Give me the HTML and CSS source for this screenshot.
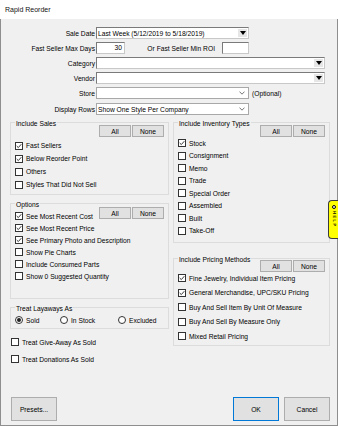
FILE: index.html
```html
<!DOCTYPE html>
<html>
<head>
<meta charset="utf-8">
<title>Rapid Reorder</title>
<link rel="stylesheet" href="styles.css">
</head>
<body>
<div class="window">
  <div class="titlebar">Rapid Reorder</div>
  <div class="content">
    <div class="form">
      <div class="row">
        <span class="lbl">Sale Date</span>
        <div class="combo sunken w153"><span class="val">Last Week (5/12/2019 to 5/18/2019)</span><span class="drop"><svg width="6" height="4" viewBox="0 0 6 4"><path d="M0 0H6L3 4Z" fill="#000"/></svg></span></div>
      </div>
      <div class="row">
        <span class="lbl">Fast Seller Max Days</span>
        <div class="textbox days">30</div>
        <span class="lbl-mid">Or Fast Seller Min ROI</span>
        <div class="textbox roi"></div>
      </div>
      <div class="row">
        <span class="lbl">Category</span>
        <div class="combo sunken w229"><span class="val"></span><span class="drop"><svg width="6" height="4" viewBox="0 0 6 4"><path d="M0 0H6L3 4Z" fill="#000"/></svg></span></div>
      </div>
      <div class="row">
        <span class="lbl">Vendor</span>
        <div class="combo sunken w229"><span class="val"></span><span class="drop"><svg width="6" height="4" viewBox="0 0 6 4"><path d="M0 0H6L3 4Z" fill="#000"/></svg></span></div>
      </div>
      <div class="row">
        <span class="lbl">Store</span>
        <div class="combo flat w153"><span class="val"></span><span class="chev"><svg width="6" height="4" viewBox="0 0 6 4"><path d="M0.5 0.6L3 3.2L5.5 0.6" fill="none" stroke="#555" stroke-width="0.8"/></svg></span></div>
        <span class="note">(Optional)</span>
      </div>
      <div class="row row-last">
        <span class="lbl">Display Rows</span>
        <div class="combo flat w153"><span class="val">Show One Style Per Company</span><span class="chev"><svg width="6" height="4" viewBox="0 0 6 4"><path d="M0.5 0.6L3 3.2L5.5 0.6" fill="none" stroke="#555" stroke-width="0.8"/></svg></span></div>
      </div>
    </div>

    <div class="groups">
      <div class="col left">
        <div class="group sales">
          <div class="g-head">
            <span class="g-title">Include Sales</span>
            <div class="btns btns-6"><button class="btn">All</button><button class="btn">None</button></div>
          </div>
          <div class="list list-13">
            <label class="chk"><span class="cb"><svg width="6" height="6" viewBox="0 0 6 6"><path d="M0.7 3L2.3 4.6L5.3 1.2" fill="none" stroke="#222" stroke-width="0.9"/></svg></span>Fast Sellers</label>
            <label class="chk"><span class="cb"><svg width="6" height="6" viewBox="0 0 6 6"><path d="M0.7 3L2.3 4.6L5.3 1.2" fill="none" stroke="#222" stroke-width="0.9"/></svg></span>Below Reorder Point</label>
            <label class="chk"><span class="cb"></span>Others</label>
            <label class="chk"><span class="cb"></span>Styles That Did Not Sell</label>
          </div>
        </div>

        <div class="group options">
          <div class="opts-top">
            <div class="opts-left">
              <span class="g-title">Options</span>
              <label class="chk"><span class="cb"><svg width="6" height="6" viewBox="0 0 6 6"><path d="M0.7 3L2.3 4.6L5.3 1.2" fill="none" stroke="#222" stroke-width="0.9"/></svg></span>See Most Recent Cost</label>
            </div>
            <div class="btns btns-7"><button class="btn">All</button><button class="btn">None</button></div>
          </div>
          <div class="list list-12">
            <label class="chk"><span class="cb"><svg width="6" height="6" viewBox="0 0 6 6"><path d="M0.7 3L2.3 4.6L5.3 1.2" fill="none" stroke="#222" stroke-width="0.9"/></svg></span>See Most Recent Price</label>
            <label class="chk"><span class="cb"><svg width="6" height="6" viewBox="0 0 6 6"><path d="M0.7 3L2.3 4.6L5.3 1.2" fill="none" stroke="#222" stroke-width="0.9"/></svg></span>See Primary Photo and Description</label>
            <label class="chk"><span class="cb"></span>Show Pie Charts</label>
            <label class="chk"><span class="cb"></span>Include Consumed Parts</label>
            <label class="chk"><span class="cb"></span>Show 0 Suggested Quantity</label>
          </div>
        </div>

        <div class="group layaways">
          <span class="g-title">Treat Layaways As</span>
          <div class="radios">
            <label class="radio r-sold"><span class="rb on"></span>Sold</label>
            <label class="radio r-stock"><span class="rb"></span>In Stock</label>
            <label class="radio"><span class="rb"></span>Excluded</label>
          </div>
        </div>

        <label class="chk solo solo-1"><span class="cb"></span>Treat Give-Away As Sold</label>
        <label class="chk solo solo-2"><span class="cb"></span>Treat Donations As Sold</label>
      </div>

      <div class="col right">
        <div class="group inventory">
          <div class="g-head">
            <span class="g-title">Include Inventory Types</span>
            <div class="btns btns-6"><button class="btn">All</button><button class="btn">None</button></div>
          </div>
          <div class="list list-125">
            <label class="chk"><span class="cb"><svg width="6" height="6" viewBox="0 0 6 6"><path d="M0.7 3L2.3 4.6L5.3 1.2" fill="none" stroke="#222" stroke-width="0.9"/></svg></span>Stock</label>
            <label class="chk"><span class="cb"></span>Consignment</label>
            <label class="chk"><span class="cb"></span>Memo</label>
            <label class="chk"><span class="cb"></span>Trade</label>
            <label class="chk"><span class="cb"></span>Special Order</label>
            <label class="chk"><span class="cb"></span>Assembled</label>
            <label class="chk"><span class="cb"></span>Built</label>
            <label class="chk"><span class="cb"></span>Take-Off</label>
          </div>
        </div>

        <div class="group pricing">
          <div class="g-head">
            <span class="g-title">Include Pricing Methods</span>
            <div class="btns btns-5"><button class="btn">All</button><button class="btn">None</button></div>
          </div>
          <div class="list list-145">
            <label class="chk"><span class="cb"><svg width="6" height="6" viewBox="0 0 6 6"><path d="M0.7 3L2.3 4.6L5.3 1.2" fill="none" stroke="#222" stroke-width="0.9"/></svg></span>Fine Jewelry, Individual Item Pricing</label>
            <label class="chk"><span class="cb"><svg width="6" height="6" viewBox="0 0 6 6"><path d="M0.7 3L2.3 4.6L5.3 1.2" fill="none" stroke="#222" stroke-width="0.9"/></svg></span>General Merchandise, UPC/SKU Pricing</label>
            <label class="chk"><span class="cb"></span>Buy And Sell Item By Unit Of Measure</label>
            <label class="chk"><span class="cb"></span>Buy And Sell By Measure Only</label>
            <label class="chk"><span class="cb"></span>Mixed Retail Pricing</label>
          </div>
        </div>
      </div>
    </div>

    <div class="footer">
      <button class="fbtn">Presets...</button>
      <span class="spacer"></span>
      <button class="fbtn default">OK</button>
      <button class="fbtn">Cancel</button>
    </div>

    <div class="help-tab">
      <span class="help-dot"></span>
      <span class="help-text">HELP</span>
    </div>
  </div>
</div>
</body>
</html>
```

FILE: styles.css
```css
* { box-sizing: border-box; margin: 0; padding: 0; }
html, body { width: 338px; height: 426px; overflow: hidden; }
body {
  font-family: "Liberation Sans", Arial, sans-serif;
  font-size: 6.7px;
  color: #000;
  background: #fff;
}
.window { width: 338px; height: 426px; display: flex; flex-direction: column; }
.titlebar {
  height: 19px; line-height: 19px; padding-left: 5px;
  font-size: 7px; background: #fff; color: #111;
}
.content {
  flex: 1; position: relative; background: #f0f0f0;
  border: 1px solid #8e8e8e; border-top: 0;
  display: flex; flex-direction: column;
}

/* top form */
.form { padding-top: 8px; display: flex; flex-direction: column; gap: 3px; }
.row { display: flex; align-items: center; height: 12px; }
.row-last { margin-top: 1px; }
.lbl { width: 94px; margin-right: 1px; text-align: right; white-space: nowrap; }
.lbl-mid { width: 97px; text-align: right; padding-right: 7px; white-space: nowrap; }
.note { margin-left: 3px; }
.combo {
  height: 12px; background: #fff; display: flex; align-items: center;
  justify-content: space-between;
}
.sunken { border: 1px solid; border-color: #7a7a7a #c8c8c8 #c8c8c8 #7a7a7a; }
.flat { border: 1px solid #a8a8a8; }
.w153 { width: 153px; }
.w229 { width: 229px; }
.val { padding-left: 1px; white-space: nowrap; }
.drop {
  width: 9px; height: 8px; margin-right: 1px; background: #e6e6e6;
  display: flex; align-items: center; justify-content: center;
}
.drop svg, .chev svg { display: block; }
.chev { margin-right: 3px; }
.textbox {
  height: 12px; background: #fff; border: 1px solid;
  border-color: #7a7a7a #c8c8c8 #c8c8c8 #7a7a7a;
  text-align: right; padding-right: 2px; line-height: 10px;
}
.days { width: 29px; }
.roi { width: 27px; }

/* groups */
.groups { display: flex; gap: 4px; padding-left: 9px; margin-top: 7px; }
.col { display: flex; flex-direction: column; }
.left { width: 159px; }
.right { width: 157px; }
.group { border: 1px solid #dcdcdc; padding: 0 4px 3px 4px; }
.g-head { display: flex; justify-content: space-between; align-items: flex-start; margin-top: -4px; }
.g-title {
  display: inline-block; align-self: flex-start; height: 10px; line-height: 10px;
  padding: 0 1px; background: #f0f0f0; white-space: nowrap;
}
.btns { display: flex; gap: 1px; }
.btns-5 { margin-top: 5px; }
.btns-6 { margin-top: 6px; }
.btns-7 { margin-top: 7px; }
.btn {
  width: 32px; height: 12px; background: #e1e1e1; border: 1px solid #adadad;
  font: inherit; color: #000; display: flex; align-items: center; justify-content: center;
}
.list { display: flex; flex-direction: column; }
.chk { display: flex; align-items: center; gap: 3px; height: 12px; white-space: nowrap; }
.list-13 { margin-top: 2px; }
.list-13 .chk { height: 13px; }
.list-12 .chk { height: 12px; }
.list-125 .chk { height: 12.5px; }
.list-145 { margin-top: -1px; }
.list-145 .chk { height: 14.5px; }
.cb {
  width: 8px; height: 8px; flex: none; background: #fff; border: 1px solid #333;
  display: flex; align-items: center; justify-content: center;
}
.cb svg { display: block; }

.sales { padding-bottom: 3px; }
.options { margin-top: 8px; padding-bottom: 16px; }
.opts-top { display: flex; justify-content: space-between; align-items: flex-start; margin-top: -4px; }
.opts-left { display: flex; flex-direction: column; }
.layaways { margin-top: 8px; padding-bottom: 2px; display: flex; flex-direction: column; }
.layaways .g-title { margin-top: -4px; }
.radios { display: flex; height: 12px; }
.radio { display: flex; align-items: center; gap: 3px; }
.r-sold { width: 45px; }
.r-stock { width: 58px; }
.rb {
  width: 8px; height: 8px; border: 1px solid #333; border-radius: 50%;
  background: #fff; display: flex; align-items: center; justify-content: center;
}
.rb.on::after { content: ""; width: 4px; height: 4px; border-radius: 50%; background: #222; }
.solo { padding-left: 1px; }
.solo-1 { margin-top: 7px; }
.solo-2 { margin-top: 5px; }

.inventory { padding-bottom: 5px; }
.pricing { margin-top: 15px; padding-bottom: 1px; }

/* footer */
.footer { margin-top: auto; display: flex; gap: 5px; padding: 0 7px 4px 10px; }
.spacer { flex: 1; }
.fbtn {
  width: 46px; height: 24px; background: #e1e1e1; border: 1px solid #adadad;
  font: inherit; color: #000;
}
.fbtn.default { border-color: #0078d7; }

/* help tab */
.help-tab {
  position: absolute; top: 181px; right: -1px; width: 10px; height: 39px;
  background: #ffff00; border: 1px solid #3a3a3a; border-right: 0;
  border-radius: 4px 0 0 4px;
  display: flex; flex-direction: column; align-items: center; padding-top: 4px; gap: 2px;
}
.help-dot { width: 4px; height: 4px; border-radius: 50%; border: 1px solid #000; background: #fff; }
.help-text { writing-mode: vertical-rl; font-size: 4px; font-weight: bold; letter-spacing: 1.5px; line-height: 6px; }
```
